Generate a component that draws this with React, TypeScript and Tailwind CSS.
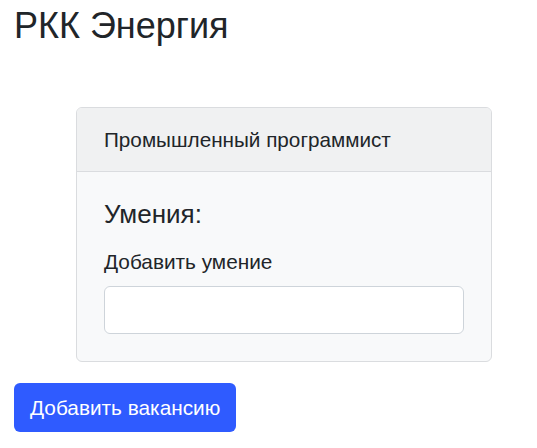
export default function App() {
  return (
    <div
      className="min-h-screen bg-white px-[14px] text-[#212529]"
      style={{ fontFamily: '"Liberation Sans", Arial, sans-serif' }}
    >
      <h1 className="m-0 pt-[4px] text-[36px] leading-[43px] font-normal">РКК Энергия</h1>

      <div className="mt-[60px] ml-[62px] w-[416px] overflow-hidden rounded-[6px] border border-[#dadcdf] bg-[#f8f9fa]">
        <div className="border-b border-[#dadcdf] bg-[#f0f1f2] px-[27px] py-[16px] text-[20.7px] leading-[31px]">
          Промышленный программист
        </div>
        <div className="px-[27px] pt-[27px] pb-[27px]">
          <h4 className="m-0 text-[26px] leading-[31px] font-normal">Умения:</h4>
          <label className="mt-[16px] block text-[20.8px] leading-[31px]">Добавить умение</label>
          <input
            type="text"
            className="mt-[9px] block h-[48px] w-full rounded-[6px] border border-[#ced4da] bg-white px-4 text-[20px] outline-none"
          />
        </div>
      </div>

      <button
        type="button"
        className="mt-[21px] h-[49px] rounded-[6px] bg-[#2f5bff] px-[16px] text-[20.8px] leading-[31px] text-white"
      >
        Добавить вакансию
      </button>
    </div>
  );
}
